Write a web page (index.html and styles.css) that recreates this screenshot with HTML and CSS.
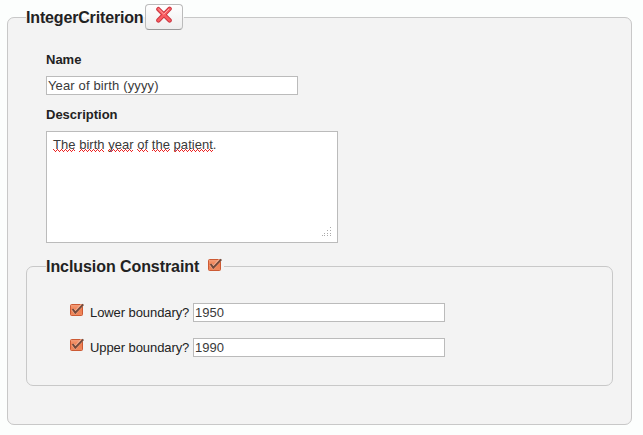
FILE: index.html
```html
<!DOCTYPE html>
<html lang="en">
<head>
<meta charset="utf-8">
<title>IntegerCriterion</title>
<link rel="stylesheet" href="styles.css">
</head>
<body>
<svg class="defs" width="0" height="0" aria-hidden="true">
  <defs>
    <linearGradient id="orange" x1="0" y1="0" x2="0" y2="1">
      <stop offset="0" stop-color="#f3a27f"/>
      <stop offset=".45" stop-color="#f07e50"/>
      <stop offset="1" stop-color="#ed8a60"/>
    </linearGradient>
    <pattern id="wave" width="4" height="3" patternUnits="userSpaceOnUse">
      <path d="M0 0h1v1H0zM1 1h1v1H1zM3 1h1v1H3zM2 2h1v1H2z" fill="#e22"/>
    </pattern>
    <symbol id="check" viewBox="0 0 15 14">
      <rect x=".5" y="1.5" width="12" height="11" rx="1" fill="url(#orange)" stroke="#cc5a34"/>
      <path d="M2.6 6.2 5.3 9.4 12 2" fill="none" stroke="#f7b598" stroke-width="3.2"/>
      <path d="M2.6 6 5.3 9.6 13.3 1.4" fill="none" stroke="#74493a" stroke-width="2"/>
    </symbol>
  </defs>
</svg>
<fieldset class="criterion">
  <legend class="criterion-title"><span>IntegerCriterion</span><button class="remove" type="button" aria-label="Remove"><svg width="18" height="18" viewBox="0 0 18 18"><path d="M3.4 3.2 14.6 14.4M14.6 2.8 3.4 14.4" stroke="#c93640" stroke-width="4.4" stroke-linecap="round"/><path d="M3.4 3.2 14.6 14.4M14.6 2.8 3.4 14.4" stroke="#fa5b60" stroke-width="2.6" stroke-linecap="round"/><path d="M3.4 2.8 8.8 8.2 14 3" fill="none" stroke="#ffa7a5" stroke-width="1"/></svg></button></legend>
  <div class="fields">
    <label class="caption" for="name">Name</label>
    <input class="text" id="name" type="text" value="Year of birth (yyyy)">
    <div class="caption second">Description</div>
    <div class="description">The birth year of the patient.<svg class="spelling" width="164" height="3"><path d="M0 0h22v3H0zM26 0h25v3H26zM55 0h25v3H55zM84 0h11v3H84zM99 0h18v3H99zM121 0h39v3H121z" fill="url(#wave)"/></svg><svg class="grip" width="10" height="10" viewBox="0 0 10 10" fill="#aaa"><path d="M8 0h1v1H8zM8 3h1v1H8zM5 3h1v1H5zM8 6h1v1H8zM5 6h1v1H5zM2 6h1v1H2zM8 8h1v1H8zM5 8h1v1H5zM2 8h1v1H2zM0 8h1v1H0z"/></svg></div>
  </div>
  <fieldset class="constraint">
    <legend class="constraint-title"><span>Inclusion Constraint</span><svg class="check" width="15" height="14"><use href="#check"/></svg></legend>
    <div class="row"><svg class="check" width="15" height="14"><use href="#check"/></svg><label for="low">Lower boundary?</label><input class="text" id="low" type="text" value="1950"></div>
    <div class="row"><svg class="check" width="15" height="14"><use href="#check"/></svg><label for="up">Upper boundary?</label><input class="text" id="up" type="text" value="1990"></div>
  </fieldset>
</fieldset>
</body>
</html>
```
FILE: styles.css
```css
* { box-sizing: border-box; }
body {
  margin: 0;
  padding: 4px 11px 0 7px;
  height: 435px;
  overflow: hidden;
  background: #fcfefd;
  color: #222;
  font: 13px/15px "Liberation Sans", Arial, sans-serif;
}
.defs { position: absolute; }
fieldset {
  margin: 0;
  min-width: 0;
  border: 1px solid #c8c8c8;
  border-radius: 7px;
}
.criterion {
  height: 421px;
  padding: 0 18px;
  background: #f3f3f3;
}
legend {
  display: flex;
  align-items: center;
  padding: 0;
  font-size: 16px;
  font-weight: bold;
}
.criterion-title {
  height: 27px;
  width: 158px;
}
.criterion-title span {
  width: 119px;
  letter-spacing: -.16px;
  white-space: nowrap;
}
.remove {
  display: flex;
  justify-content: center;
  align-self: flex-start;
  width: 38px;
  height: 26px;
  padding: 1px 0 0;
  border: 1px solid #bbb;
  border-bottom-color: #999;
  border-radius: 4px;
  background: linear-gradient(#fff, #eee);
}
.fields { padding: 21px 0 0 20px; }
.caption {
  display: block;
  height: 24px;
  font-weight: bold;
}
.caption.second { margin-top: 12px; }
.text {
  display: block;
  width: 252px;
  height: 19px;
  margin: 0;
  padding: 0 1px;
  border: 1px solid #bbb;
  background: #fff;
  color: #3a3a3a;
  font: inherit;
}
#name { letter-spacing: .14px; }
.description {
  position: relative;
  width: 292px;
  height: 112px;
  padding: 5px 6px;
  border: 1px solid #bbb;
  background: #fff;
  color: #3a3a3a;
  letter-spacing: .03px;
}
.spelling { position: absolute; left: 6px; top: 17px; }
.grip { position: absolute; right: 5px; bottom: 5px; }
.constraint {
  height: 129px;
  margin-top: 14px;
  padding: 0 19px;
}
.constraint-title { height: 19px; width: 178px; }
.constraint-title span {
  width: 162px;
  letter-spacing: -.07px;
  white-space: nowrap;
}
.constraint-title .check { margin-top: -3px; }
.check { flex: none; }
.row {
  display: flex;
  align-items: center;
  height: 19px;
  margin: 16px 0 0 24px;
}
.constraint-title + .row { margin-top: 27px; }
.row label {
  width: 103px;
  margin-left: 5px;
  letter-spacing: -.08px;
}
.row .check { margin-top: -5px; }
```
